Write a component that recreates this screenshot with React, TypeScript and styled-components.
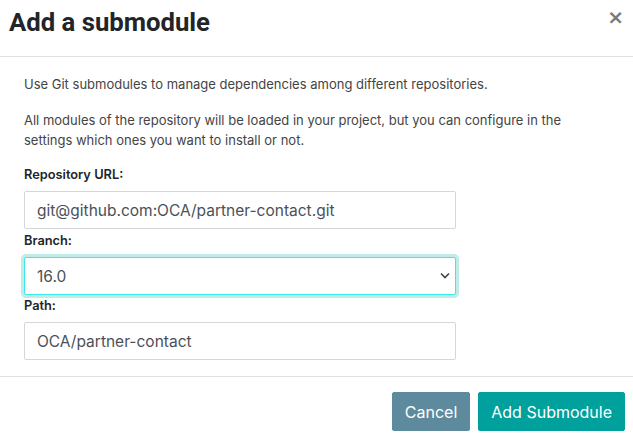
import React from "react";
import styled, { createGlobalStyle } from "styled-components";

const Global = createGlobalStyle`
  html, body { margin: 0; padding: 0; background: #fff; }
  body { font-family: Inter, "Noto Sans", sans-serif; }
  * { box-sizing: border-box; }
`;

const Dialog = styled.div`
  width: 633px;
  height: 436px;
  display: flex;
  flex-direction: column;
  background: #fff;
`;

const Header = styled.header`
  height: 57px;
  display: flex;
  align-items: flex-start;
  justify-content: space-between;
  padding: 6px 9px 0 9px;
  border-bottom: 1px solid #dee2e6;
`;

const Title = styled.h4`
  margin: 0;
  font-family: Roboto, "Liberation Sans", sans-serif;
  font-weight: 700;
  font-size: 25.7px;
  line-height: 32px;
  color: #212529;
`;

const Close = styled.button`
  border: 0;
  background: none;
  padding: 0;
  margin-top: -5px;
  font-family: "DejaVu Sans", sans-serif;
  font-weight: 700;
  font-size: 20px;
  line-height: 32px;
  color: #7a7a7a;
  cursor: pointer;
`;

const Body = styled.main`
  flex: 1;
  padding: 17px 24px 0;
`;

const Text = styled.p`
  margin: 0 0 16px;
  font-size: 13px;
  line-height: 20px;
  color: #444;
  max-width: 560px;
`;

const Field = styled.div<{ $gap?: number }>`
  margin-bottom: ${(p) => p.$gap ?? 3}px;
`;

const Label = styled.label`
  display: block;
  font-size: 12.8px;
  font-weight: 600;
  line-height: 17px;
  color: #212529;
  margin-bottom: 8px;
`;

const Input = styled.input`
  display: block;
  width: 432px;
  height: 38px;
  padding: 0 12px;
  border: 1px solid #d3d6da;
  border-radius: 2px;
  font-family: Inter, "Noto Sans", sans-serif;
  font-size: 15.5px;
  color: #4b5058;
  background: #fff;
  outline: none;
`;

const SelectWrap = styled.div`
  position: relative;
  width: 432px;
`;

const Select = styled.select`
  display: block;
  width: 432px;
  height: 38px;
  padding: 0 30px 0 12px;
  border: 1px solid #3ce8e8;
  border-radius: 2px;
  box-shadow: 0 0 0 3px #bfebe9;
  appearance: none;
  font-family: Inter, "Noto Sans", sans-serif;
  font-size: 15.5px;
  color: #4b5058;
  background: #fff;
  outline: none;
`;

const Chevron = styled.svg`
  position: absolute;
  right: 6px;
  top: 15px;
  pointer-events: none;
`;

const Footer = styled.footer`
  height: 60px;
  border-top: 1px solid #dee2e6;
  display: flex;
  justify-content: flex-end;
  align-items: flex-start;
  gap: 8px;
  padding: 15px 8px 0;
`;

const Button = styled.button<{ $variant: "primary" | "secondary" }>`
  height: 39px;
  padding: 0 12px;
  border: 1px solid ${(p) => (p.$variant === "primary" ? "#00a09d" : "#5d8a9d")};
  border-radius: 2px;
  background: ${(p) => (p.$variant === "primary" ? "#00a09d" : "#5d8a9d")};
  color: #fff;
  font-family: Inter, "Noto Sans", sans-serif;
  font-size: 16px;
  cursor: pointer;
`;

export default function App() {
  return (
    <>
      <Global />
      <Dialog>
        <Header>
          <Title>Add a submodule</Title>
          <Close aria-label="Close">×</Close>
        </Header>
        <Body>
          <Text>Use Git submodules to manage dependencies among different repositories.</Text>
          <Text>
            All modules of the repository will be loaded in your project, but you can configure in the
            settings which ones you want to install or not.
          </Text>
          <Field>
            <Label>Repository URL:</Label>
            <Input defaultValue="git@github.com:OCA/partner-contact.git" />
          </Field>
          <Field $gap={2}>
            <Label>Branch:</Label>
            <SelectWrap>
              <Select defaultValue="16.0">
                <option>16.0</option>
              </Select>
              <Chevron width="10" height="7" viewBox="0 0 10 7">
                <path d="M1 1.5 L5 5.5 L9 1.5" fill="none" stroke="#444" strokeWidth="1.6" />
              </Chevron>
            </SelectWrap>
          </Field>
          <Field>
            <Label>Path:</Label>
            <Input defaultValue="OCA/partner-contact" />
          </Field>
        </Body>
        <Footer>
          <Button $variant="secondary">Cancel</Button>
          <Button $variant="primary">Add Submodule</Button>
        </Footer>
      </Dialog>
    </>
  );
}
